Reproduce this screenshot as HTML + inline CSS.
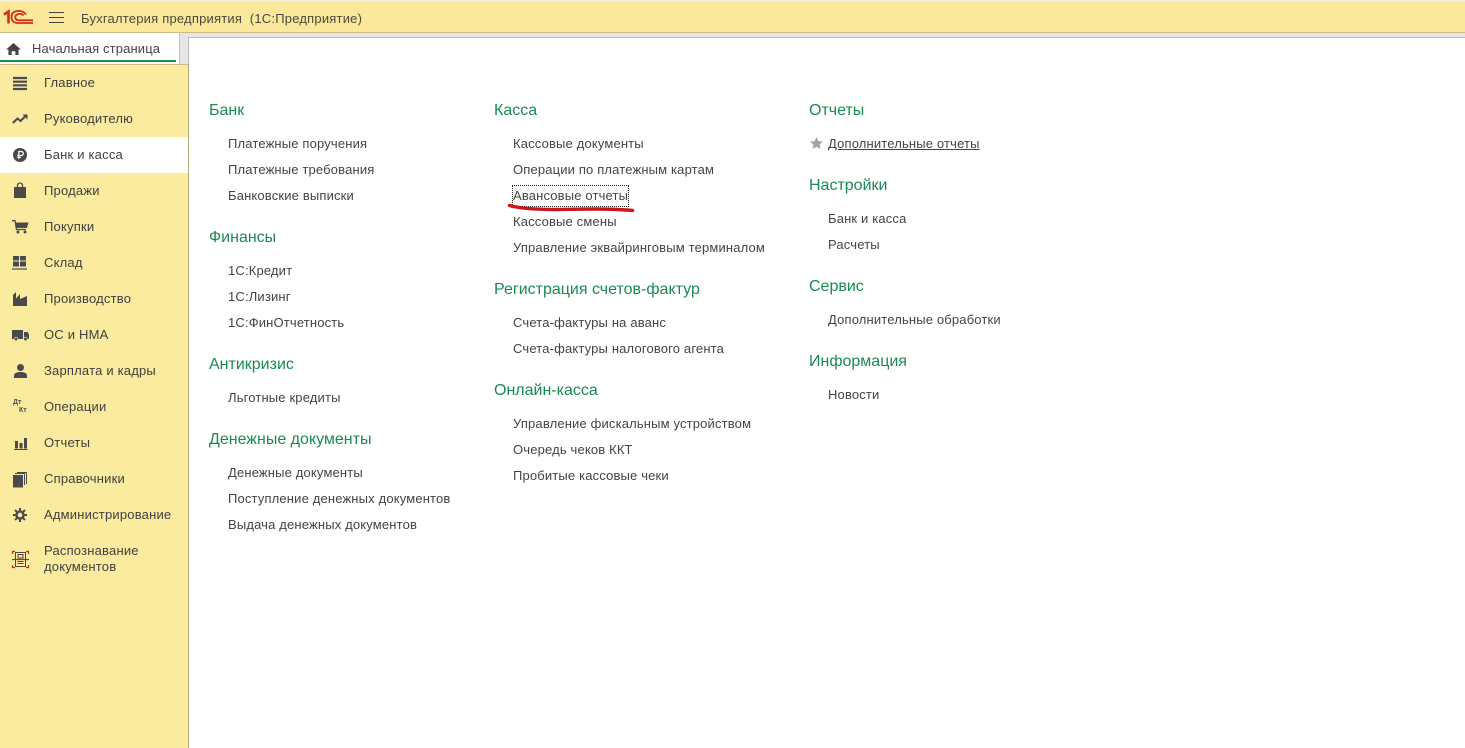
<!DOCTYPE html>
<html lang="ru"><head><meta charset="utf-8"><title>Бухгалтерия предприятия</title>
<style>
html,body{margin:0;padding:0;width:1465px;height:748px;overflow:hidden;background:#fff}
body{position:relative;font-family:"Liberation Sans",Arial,sans-serif;font-size:13px;color:#4b4b4b}
.a{position:absolute;white-space:nowrap;line-height:16px}
.h{position:absolute;white-space:nowrap;font-size:16px;line-height:20px;color:#1a8a55}
.l{position:absolute;white-space:nowrap;font-size:13px;line-height:16px;letter-spacing:.16px;color:#444}
.s{position:absolute;left:44px;white-space:nowrap;font-size:13px;line-height:16px;letter-spacing:.2px;color:#3f3f3f}
svg{position:absolute;overflow:visible}
</style></head><body>
<div style="position:absolute;left:0;top:0;width:1465px;height:2px;background:#f3f0dc"></div>
<div style="position:absolute;left:0;top:2px;width:1465px;height:30px;background:#fbe89b"></div>
<div style="position:absolute;left:0;top:32px;width:1465px;height:1px;background:#c9bd8b"></div>
<div style="position:absolute;left:0;top:33px;width:180px;height:31px;background:#fff"></div>
<div style="position:absolute;left:180px;top:33px;width:8px;height:31px;background:#e6e6e6"></div>
<div style="position:absolute;left:188px;top:33px;width:1277px;height:4px;background:#e6e6e6"></div>
<div style="position:absolute;left:179px;top:33px;width:1px;height:31px;background:#c4c4c4"></div>
<div style="position:absolute;left:188px;top:37px;width:1277px;height:1px;background:#b9b9b9"></div>
<div style="position:absolute;left:188px;top:37px;width:1px;height:27px;background:#b9b9b9"></div>
<div style="position:absolute;left:0;top:60px;width:176px;height:2px;background:#1c8f57"></div>
<div style="position:absolute;left:0;top:64px;width:188px;height:684px;background:#fbeb9e"></div>
<div style="position:absolute;left:0;top:64px;width:188px;height:1px;background:#c9bd8b"></div>
<div style="position:absolute;left:188px;top:64px;width:1px;height:684px;background:#b5ab7a"></div>
<div style="position:absolute;left:0;top:137px;width:188px;height:36px;background:#fff"></div>

<svg style="left:0;top:0" width="34" height="26" viewBox="0 0 34 26"><path d="M4 14.500L8.500 11.500V23.500" fill="none" stroke="#cf2e1e" stroke-width="2.600"/><path d="M26 14.500C24 11.500 20 10.500 17 11C13 11.700 11.500 14 11.500 17C11.500 21 14 23 18 23H33" fill="none" stroke="#cf2e1e" stroke-width="1.800"/><path d="M23.500 15.500C22 13.800 20 13.500 18.500 14C16 14.600 15.300 16 15.300 17C15.300 19.500 17 20.300 19 20.300H33" fill="none" stroke="#cf2e1e" stroke-width="1.800"/></svg>
<svg style="left:49px;top:12px" width="15" height="12"><path d="M0 .5H15M0 5.500H15M0 10.500H15" stroke="#444" stroke-width="1"/></svg>
<div class="a" style="left:81px;top:11px;letter-spacing:.21px;color:#4a4a3c">Бухгалтерия предприятия&nbsp; (1С:Предприятие)</div>
<svg style="left:6px;top:43px" width="15" height="12" viewBox="0 0 16 13"><path d="M8 0L0 7H2.500V13H6V9H10V13H13.500V7H16Z" fill="#444"/></svg>
<div class="a" style="left:32px;top:41px;letter-spacing:.13px;color:#444">Начальная страница</div>

<svg style="left:13px;top:77px" width="14" height="13"><path d="M0 1H14M0 4.700H14M0 8.300H14M0 12H14" stroke="#4a4a4a" stroke-width="2.200"/></svg>
<div class="s" style="top:75px">Главное</div>
<svg style="left:12px;top:114px" width="16" height="10"><path d="M.8 9L5.500 4.500L8.500 7L14 1.500" fill="none" stroke="#4a4a4a" stroke-width="2"/><path d="M10.500 .5H15.500V5.500Z" fill="#4a4a4a"/></svg>
<div class="s" style="top:111px">Руководителю</div>
<svg style="left:13px;top:148px" width="14" height="14"><circle cx="7" cy="7" r="7" fill="#4a4a4a"/><path d="M5.800 11V3.500H8.300A2 2 0 0 1 8.300 7.500H4.300M4.300 9.300H8" fill="none" stroke="#fff" stroke-width="1.200"/></svg>
<div class="s" style="top:147px">Банк и касса</div>
<svg style="left:14px;top:183px" width="13" height="15"><path d="M0 4H12V15H0Z" fill="#4a4a4a"/><path d="M3.500 6V2.500A2.500 2.500 0 0 1 8.500 2.500V6" fill="none" stroke="#4a4a4a" stroke-width="1.300"/></svg>
<div class="s" style="top:183px">Продажи</div>
<svg style="left:12px;top:220px" width="17" height="14"><path d="M0 .7H3L4.500 9.500H14" fill="none" stroke="#4a4a4a" stroke-width="1.300"/><path d="M3.500 2.500H16.500L15 8H4.500Z" fill="#4a4a4a"/><circle cx="6" cy="12" r="1.500" fill="#4a4a4a"/><circle cx="13" cy="12" r="1.500" fill="#4a4a4a"/></svg>
<div class="s" style="top:219px">Покупки</div>
<svg style="left:12px;top:256px" width="15" height="14"><path d="M1 0H7V4.500H1ZM8 0H14V4.500H8ZM1 5.500H7V10.500H1ZM8 5.500H14V10.500H8Z" fill="#4a4a4a"/><path d="M0 13H15" stroke="#4a4a4a" stroke-width="1.200"/></svg>
<div class="s" style="top:255px">Склад</div>
<svg style="left:13px;top:292px" width="14" height="14"><path d="M0 14V3L3 0V6.500L7 2V7L14 4V14Z" fill="#4a4a4a"/></svg>
<div class="s" style="top:291px">Производство</div>
<svg style="left:12px;top:330px" width="17" height="12"><path d="M0 0H11V9H0ZM12 2H15.500L17 4.500V9H12Z" fill="#4a4a4a"/><circle cx="4" cy="9" r="1.800" fill="#4a4a4a" stroke="#fbeb9e" stroke-width=".7"/><circle cx="13.500" cy="9" r="1.800" fill="#4a4a4a" stroke="#fbeb9e" stroke-width=".7"/></svg>
<div class="s" style="top:327px">ОС и НМА</div>
<svg style="left:14px;top:364px" width="13" height="14"><circle cx="6.500" cy="3.500" r="3.500" fill="#4a4a4a"/><path d="M0 14V11.500C0 9 3 8 6.500 8C10 8 13 9 13 11.500V14Z" fill="#4a4a4a"/></svg>
<div class="s" style="top:363px">Зарплата и кадры</div>
<div class="a" style="left:13px;top:399px;font-size:7px;line-height:8px;font-weight:bold;color:#4a4a4a">Дт</div>
<div class="a" style="left:19px;top:407px;font-size:7px;line-height:8px;font-weight:bold;color:#4a4a4a">Кт</div>
<div class="s" style="top:399px">Операции</div>
<svg style="left:14px;top:438px" width="13" height="12"><path d="M1 3H4V10.500H1ZM5.500 5H8.500V10.500H5.500ZM10 0H13V10.500H10Z" fill="#4a4a4a"/><path d="M0 11.500H13.500" stroke="#4a4a4a"/></svg>
<div class="s" style="top:435px">Отчеты</div>
<svg style="left:13px;top:472px" width="14" height="16"><path d="M0 3H10V15.500H0Z" fill="#4a4a4a"/><path d="M2 1.500H11.500V13M4 .5H13.500V12" fill="none" stroke="#4a4a4a"/></svg>
<div class="s" style="top:471px">Справочники</div>
<svg style="left:13px;top:508px" width="14" height="14" viewBox="0 0 15 15"><circle cx="7.500" cy="7.500" r="3.800" fill="none" stroke="#4a4a4a" stroke-width="2.600"/><path d="M7.500 0V15M0 7.500H15M2.200 2.200L12.800 12.800M12.800 2.200L2.200 12.800" stroke="#4a4a4a" stroke-width="2.200" stroke-dasharray="2.600 9.800 2.600 0"/></svg>
<div class="s" style="top:507px">Администрирование</div>
<svg style="left:12px;top:551px" width="17" height="17"><path d="M.5 3V.5H3M14 .5H16.500V3M.5 14V16.500H3M14 16.500H16.500V14M0 8.500H17" fill="none" stroke="#c2291c" stroke-width="1.200"/><path d="M3.500 1.500H13.500V15.500H3.500Z" fill="none" stroke="#4a4a4a"/><path d="M6 3.500H11V7H6ZM5.500 10.500H11.500M5.500 12.500H11.500" fill="none" stroke="#4a4a4a"/></svg>
<div class="s" style="top:543px">Распознавание</div>
<div class="s" style="top:559px">документов</div>

<div class="h" style="left:209px;top:101px">Банк</div>
<div class="l" style="left:228px;top:136px">Платежные поручения</div>
<div class="l" style="left:228px;top:162px">Платежные требования</div>
<div class="l" style="left:228px;top:188px">Банковские выписки</div>
<div class="h" style="left:209px;top:228px">Финансы</div>
<div class="l" style="left:228px;top:263px">1С:Кредит</div>
<div class="l" style="left:228px;top:289px">1С:Лизинг</div>
<div class="l" style="left:228px;top:315px">1С:ФинОтчетность</div>
<div class="h" style="left:209px;top:355px">Антикризис</div>
<div class="l" style="left:228px;top:390px">Льготные кредиты</div>
<div class="h" style="left:209px;top:430px">Денежные документы</div>
<div class="l" style="left:228px;top:465px">Денежные документы</div>
<div class="l" style="left:228px;top:491px">Поступление денежных документов</div>
<div class="l" style="left:228px;top:517px">Выдача денежных документов</div>

<div class="h" style="left:494px;top:101px">Касса</div>
<div class="l" style="left:513px;top:136px">Кассовые документы</div>
<div class="l" style="left:513px;top:162px">Операции по платежным картам</div>
<div class="l" style="left:513px;top:188px">Авансовые отчеты</div>
<div style="position:absolute;left:512px;top:185px;width:115px;height:20px;border:1px dotted #222"></div>
<svg style="left:0;top:0" width="700" height="220"><path d="M509.500 205.500C525 209.800 550 209.800 570 209.300C590 208.800 615 208.800 632.500 210.500" fill="none" stroke="#c8161d" stroke-width="3.400" stroke-linecap="round"/></svg>
<div class="l" style="left:513px;top:214px">Кассовые смены</div>
<div class="l" style="left:513px;top:240px">Управление эквайринговым терминалом</div>
<div class="h" style="left:494px;top:280px">Регистрация счетов-фактур</div>
<div class="l" style="left:513px;top:315px">Счета-фактуры на аванс</div>
<div class="l" style="left:513px;top:341px">Счета-фактуры налогового агента</div>
<div class="h" style="left:494px;top:381px">Онлайн-касса</div>
<div class="l" style="left:513px;top:416px">Управление фискальным устройством</div>
<div class="l" style="left:513px;top:442px">Очередь чеков ККТ</div>
<div class="l" style="left:513px;top:468px">Пробитые кассовые чеки</div>

<div class="h" style="left:809px;top:101px">Отчеты</div>
<svg style="left:810px;top:137px" width="13" height="12" viewBox="0 0 13 12"><path d="M6.500 0L8.400 4.100L13 4.600L9.600 7.600L10.500 12L6.500 9.800L2.500 12L3.400 7.600L0 4.600L4.600 4.100Z" fill="#a3a3a3"/></svg>
<div class="l" style="left:828px;top:136px;text-decoration:underline">Дополнительные отчеты</div>
<div class="h" style="left:809px;top:176px">Настройки</div>
<div class="l" style="left:828px;top:211px">Банк и касса</div>
<div class="l" style="left:828px;top:237px">Расчеты</div>
<div class="h" style="left:809px;top:277px">Сервис</div>
<div class="l" style="left:828px;top:312px">Дополнительные обработки</div>
<div class="h" style="left:809px;top:352px">Информация</div>
<div class="l" style="left:828px;top:387px">Новости</div>
</body></html>
